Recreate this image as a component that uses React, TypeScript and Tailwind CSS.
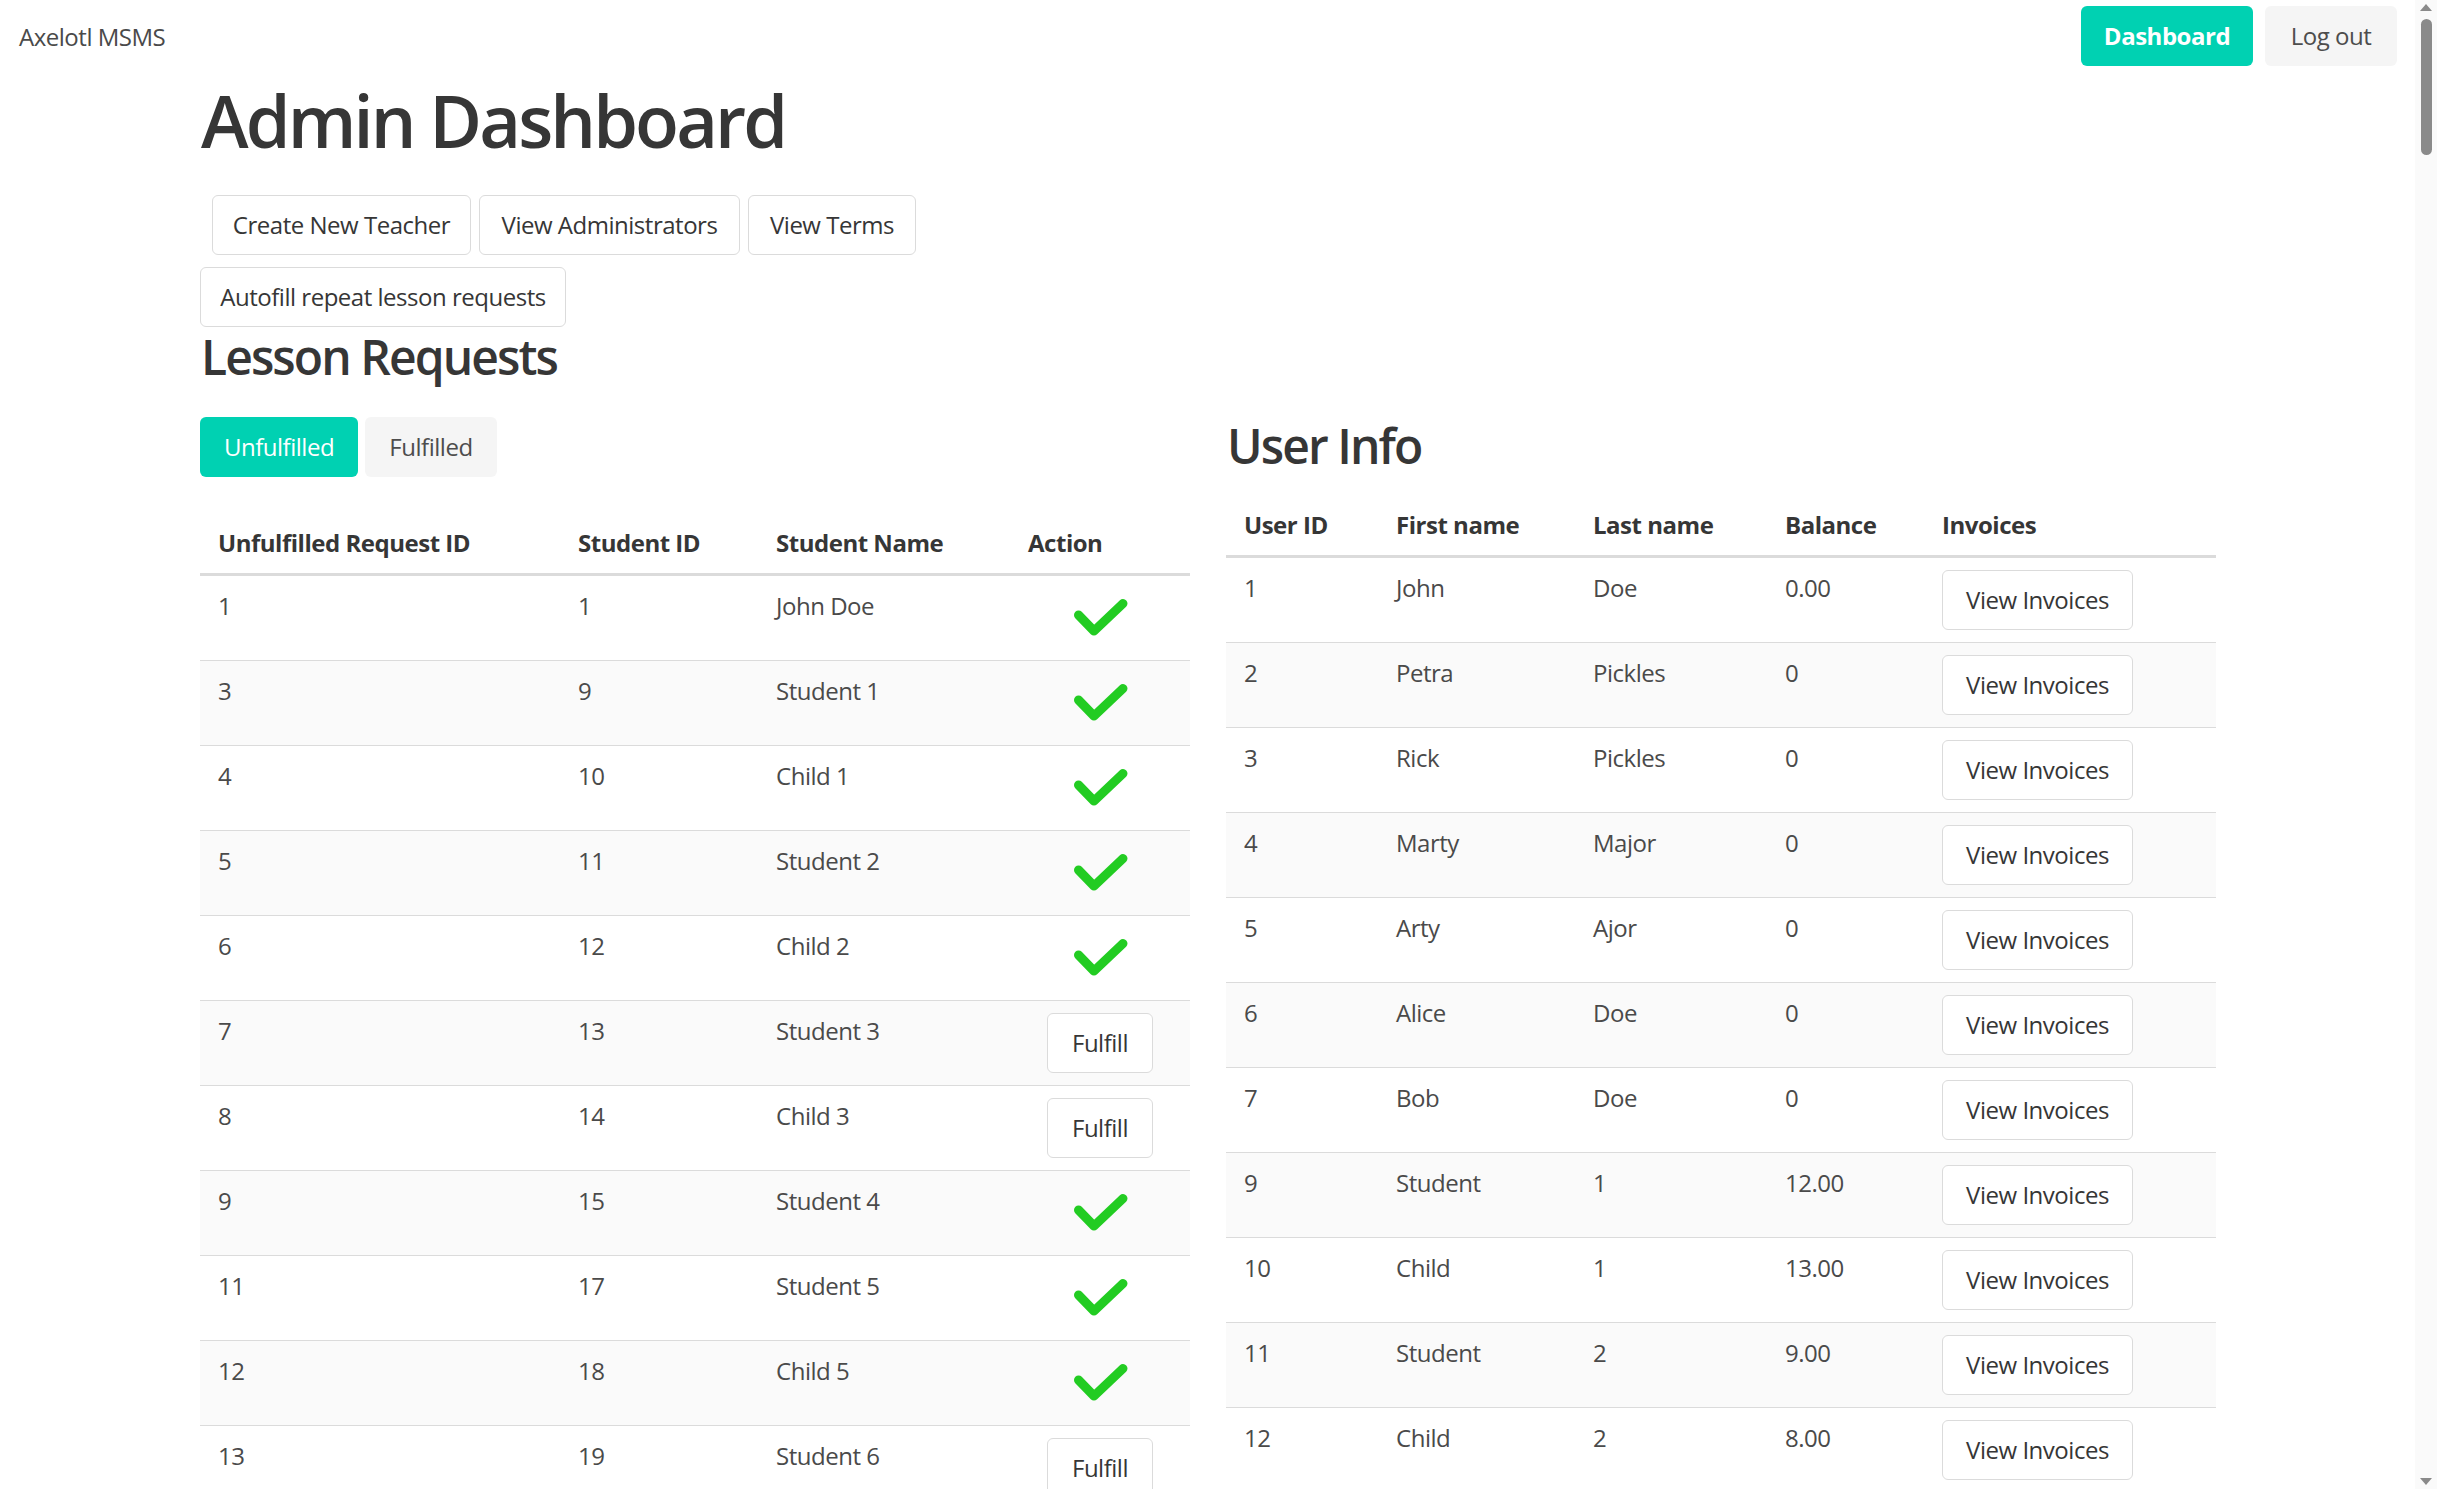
import React from "react";

const REQUESTS = [
  { id: 1, studentId: 1, name: "John Doe", done: true },
  { id: 3, studentId: 9, name: "Student 1", done: true },
  { id: 4, studentId: 10, name: "Child 1", done: true },
  { id: 5, studentId: 11, name: "Student 2", done: true },
  { id: 6, studentId: 12, name: "Child 2", done: true },
  { id: 7, studentId: 13, name: "Student 3", done: false },
  { id: 8, studentId: 14, name: "Child 3", done: false },
  { id: 9, studentId: 15, name: "Student 4", done: true },
  { id: 11, studentId: 17, name: "Student 5", done: true },
  { id: 12, studentId: 18, name: "Child 5", done: true },
  { id: 13, studentId: 19, name: "Student 6", done: false },
  { id: 14, studentId: 20, name: "Child 6", done: false },
  { id: 15, studentId: 21, name: "Student 7", done: true },
];

const USERS = [
  { id: 1, first: "John", last: "Doe", balance: "0.00" },
  { id: 2, first: "Petra", last: "Pickles", balance: "0" },
  { id: 3, first: "Rick", last: "Pickles", balance: "0" },
  { id: 4, first: "Marty", last: "Major", balance: "0" },
  { id: 5, first: "Arty", last: "Ajor", balance: "0" },
  { id: 6, first: "Alice", last: "Doe", balance: "0" },
  { id: 7, first: "Bob", last: "Doe", balance: "0" },
  { id: 9, first: "Student", last: "1", balance: "12.00" },
  { id: 10, first: "Child", last: "1", balance: "13.00" },
  { id: 11, first: "Student", last: "2", balance: "9.00" },
  { id: 12, first: "Child", last: "2", balance: "8.00" },
  { id: 13, first: "Student", last: "3", balance: "0" },
  { id: 14, first: "Child", last: "3", balance: "0" },
];

const btn =
  "h-[60px] rounded-[6px] border border-[#dbdbdb] bg-white text-[24px] leading-[36px] text-[#363636] flex items-center justify-center";
const th = "px-[18px] pt-[12px] pb-[12px] text-left align-top font-bold text-[#363636] border-b-[3px] border-[#dbdbdb]";
const td = "px-[18px] py-[12px] align-top border-b border-[#dbdbdb]";
const h2 = "text-[48px] leading-[54px] font-semibold tracking-[-0.04em] text-[#363636] pl-[1px]";

const Check = () => (
  <svg width="55" height="40" viewBox="0 0 55 40">
    <polyline
      points="5.5,17 21,33 50,5.5"
      fill="none"
      stroke="#22cc22"
      strokeWidth="9"
      strokeLinecap="round"
      strokeLinejoin="round"
    />
  </svg>
);

// browser scrollbar as it shows in the screenshot
const Scrollbar = () => (
  <div className="fixed right-0 top-0 h-screen w-[22px] bg-[#fafafa] flex flex-col items-center">
    <div className="mt-[4px] w-0 h-0 border-l-[6px] border-r-[6px] border-b-[7px] border-l-transparent border-r-transparent border-b-[#8a8a8a]" />
    <div className="mt-[8px] w-[11px] h-[136px] rounded-full bg-[#8a8a8a]" />
    <div className="mt-auto mb-[4px] w-0 h-0 border-l-[6px] border-r-[6px] border-t-[7px] border-l-transparent border-r-transparent border-t-[#8a8a8a]" />
  </div>
);

export default function App() {
  return (
    <div className="min-h-screen bg-white font-['Open_Sans',sans-serif] text-[24px] leading-[36px] tracking-[-0.02em] text-[#4a4a4a]">
      {/* navbar */}
      <nav className="h-[78px] flex items-start justify-between">
        <a className="pl-[19px] pt-[19px]">Axelotl MSMS</a>
        <div className="flex gap-[12px] pt-[6px] pr-[40px]">
          <button className="h-[60px] w-[172px] rounded-[6px] bg-[#00d1b2] font-bold text-white">Dashboard</button>
          <button className="h-[60px] w-[132px] rounded-[6px] bg-[#f5f5f5] text-[#4d4d4d]">Log out</button>
        </div>
      </nav>

      <div className="ml-[200px] w-[2016px]">
        <h1 className="mt-[2px] text-[72px] leading-[81px] font-semibold tracking-[-0.04em] text-[#363636] pl-[1px]">
          Admin Dashboard
        </h1>

        <div className="mt-[34px] ml-[12px] flex gap-[8px]">
          <button className={`${btn} w-[259px]`}>Create New Teacher</button>
          <button className={`${btn} w-[261px]`}>View Administrators</button>
          <button className={`${btn} w-[168px]`}>View Terms</button>
        </div>
        <div className="mt-[12px] flex">
          <button className={`${btn} w-[366px]`}>Autofill repeat lesson requests</button>
        </div>

        <h2 className={`mt-[3px] ${h2}`}>Lesson Requests</h2>

        <div className="mt-[33px] flex gap-[36px] items-start">
          {/* left column */}
          <div className="w-[990px]">
            <div className="flex gap-[7px]">
              <button className="h-[60px] w-[158px] rounded-[6px] bg-[#00d1b2] text-white">Unfulfilled</button>
              <button className="h-[60px] w-[132px] rounded-[6px] bg-[#f5f5f5] text-[#4d4d4d]">Fulfilled</button>
            </div>
            <table className="mt-[36px] w-[990px] table-fixed border-separate border-spacing-0">
              <colgroup>
                <col className="w-[360px]" />
                <col className="w-[198px]" />
                <col className="w-[252px]" />
                <col className="w-[180px]" />
              </colgroup>
              <thead>
                <tr>
                  <th className={th}>Unfulfilled Request ID</th>
                  <th className={th}>Student ID</th>
                  <th className={th}>Student Name</th>
                  <th className={th}>Action</th>
                </tr>
              </thead>
              <tbody>
                {REQUESTS.map((r, i) => (
                  <tr key={r.id} className={i % 2 === 1 ? "bg-[#fafafa]" : "bg-white"}>
                    <td className={td}>{r.id}</td>
                    <td className={td}>{r.studentId}</td>
                    <td className={td}>{r.name}</td>
                    <td className={td}>
                      <div className="h-[60px] flex items-center justify-center">
                        {r.done ? <Check /> : <button className={`${btn} w-[106px]`}>Fulfill</button>}
                      </div>
                    </td>
                  </tr>
                ))}
              </tbody>
            </table>
          </div>

          {/* right column */}
          <div className="w-[990px]">
            <h2 className={`mt-[2px] ${h2}`}>User Info</h2>
            <table className="mt-[22px] w-[990px] table-fixed border-separate border-spacing-0">
              <colgroup>
                <col className="w-[152px]" />
                <col className="w-[197px]" />
                <col className="w-[192px]" />
                <col className="w-[157px]" />
                <col className="w-[292px]" />
              </colgroup>
              <thead>
                <tr>
                  <th className={th}>User ID</th>
                  <th className={th}>First name</th>
                  <th className={th}>Last name</th>
                  <th className={th}>Balance</th>
                  <th className={th}>Invoices</th>
                </tr>
              </thead>
              <tbody>
                {USERS.map((u, i) => (
                  <tr key={u.id} className={i % 2 === 1 ? "bg-[#fafafa]" : "bg-white"}>
                    <td className={td}>{u.id}</td>
                    <td className={td}>{u.first}</td>
                    <td className={td}>{u.last}</td>
                    <td className={td}>{u.balance}</td>
                    <td className={td}>
                      <button className={`${btn} w-[191px]`}>View Invoices</button>
                    </td>
                  </tr>
                ))}
              </tbody>
            </table>
          </div>
        </div>
      </div>
      <Scrollbar />
    </div>
  );
}
